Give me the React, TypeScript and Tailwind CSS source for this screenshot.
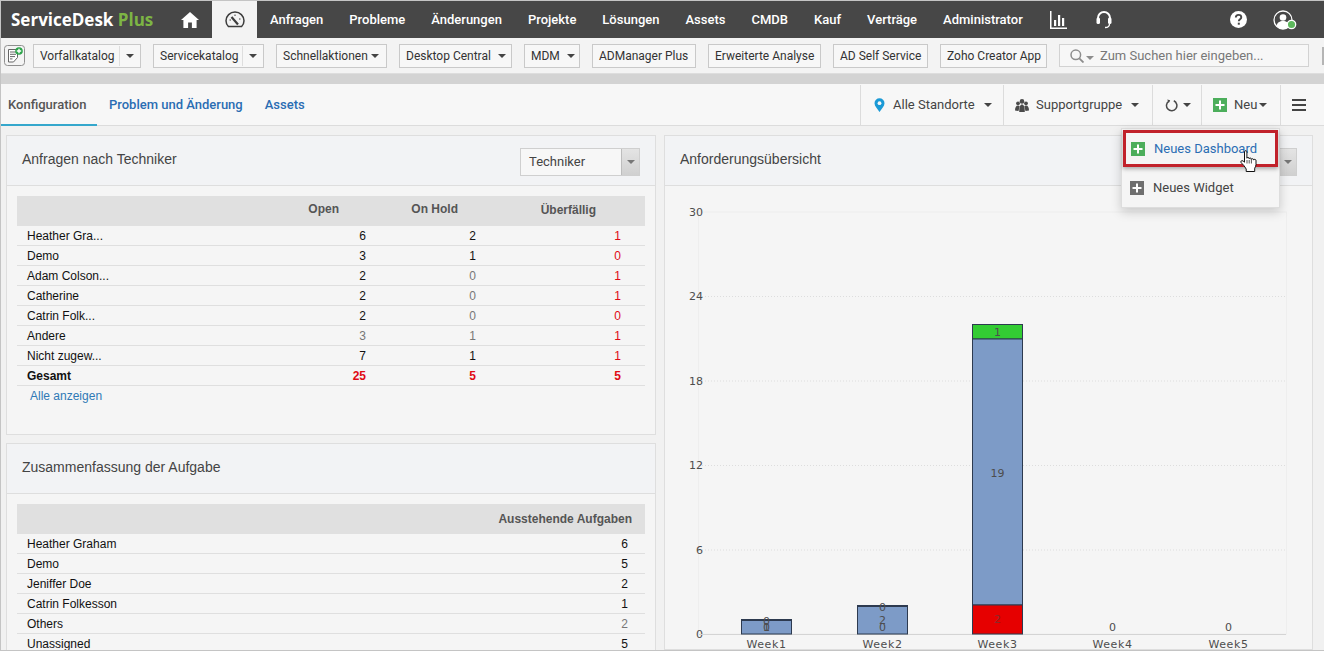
import React from 'react';

const roboto = "font-['Roboto',sans-serif]";
const arial = "font-['Liberation_Sans',sans-serif]";

function Caret({ className = 'border-t-[#444]' }: { className?: string }) {
  return <span className={`inline-block h-0 w-0 border-x-[4px] border-t-[4px] border-x-transparent ${className}`} />;
}

function PlusBox({ color }: { color: string }) {
  return (
    <svg width="14" height="14" viewBox="0 0 14 14" className="shrink-0">
      <rect width="14" height="14" fill={color} />
      <path d="M7 2.5v9M2.5 7h9" stroke="#fff" strokeWidth="2" />
    </svg>
  );
}

function HomeIcon() {
  return (
    <svg width="18" height="16" viewBox="0 0 18 16">
      <path d="M9 0 L18 8 L15.6 8 L15.6 16 L10.9 16 L10.9 10.5 L7.1 10.5 L7.1 16 L2.4 16 L2.4 8 L0 8 Z" fill="#fff" />
    </svg>
  );
}

function GaugeIcon() {
  return (
    <svg width="20" height="17" viewBox="0 0 20 17" fill="none">
      <path d="M3.4 15.5C1.9 14 1 12 1 9.8 1 5 5 1 10 1s9 4 9 8.8c0 2.200-.9 4.200-2.400 5.700z" stroke="#3c3c3c" strokeWidth="1.500" />
      <path d="M6.500 6 13 13.500" stroke="#3c3c3c" strokeWidth="2.200" />
      <path d="M10 3.500v1.500M15.500 8h-1.500M4.500 9H6" stroke="#3c3c3c" strokeWidth="1" />
    </svg>
  );
}

function ChartIcon() {
  return (
    <svg width="17" height="18" viewBox="0 0 17 18" fill="#fff">
      <rect x="0" y="0" width="1.500" height="18" />
      <rect x="0" y="16.500" width="17" height="1.500" />
      <rect x="4" y="9" width="2.200" height="6" />
      <rect x="8" y="4" width="2.200" height="11" />
      <rect x="12" y="7" width="2.200" height="8" />
    </svg>
  );
}

function HeadsetIcon() {
  return (
    <svg width="16" height="19" viewBox="0 0 16 19" fill="none">
      <path d="M2 11V8a6 6 0 0 1 12 0v3" stroke="#fff" strokeWidth="2" />
      <rect x="0.500" y="7.500" width="3.500" height="6.500" rx="1.500" fill="#fff" />
      <rect x="12" y="7.500" width="3.500" height="6.500" rx="1.500" fill="#fff" />
      <path d="M13.500 14c0 2.500-2 3.500-4.500 3.500" stroke="#fff" strokeWidth="1.300" />
    </svg>
  );
}

function HelpIcon() {
  return (
    <svg width="17" height="17" viewBox="0 0 17 17">
      <circle cx="8.500" cy="8.500" r="8.500" fill="#fff" />
      <path d="M5.800 6.500c0-1.600 1.200-2.600 2.800-2.600s2.700 1 2.700 2.400c0 2-2.500 2-2.500 4" fill="none" stroke="#474747" strokeWidth="1.900" />
      <rect x="7.800" y="11.700" width="2" height="2" fill="#474747" />
    </svg>
  );
}

function UserIcon() {
  return (
    <svg width="24" height="20" viewBox="0 0 24 20" fill="none">
      <circle cx="10" cy="10" r="9" stroke="#fff" strokeWidth="1.300" />
      <circle cx="10" cy="7.500" r="3.300" fill="#fff" />
      <path d="M3.500 16c.6-3.600 3.300-5 6.500-5s5.900 1.400 6.500 5c-1.600 1.900-4 3-6.500 3s-4.900-1.100-6.500-3z" fill="#fff" />
      <circle cx="18.500" cy="14.500" r="4.200" fill="#5cb85c" stroke="#fff" strokeWidth="1.300" />
    </svg>
  );
}

function NoteIcon() {
  return (
    <svg width="21" height="21" viewBox="0 0 21 21" fill="none">
      <rect x="0.500" y="0.500" width="20" height="20" rx="3" fill="#f4f4f4" stroke="#8f8f8f" />
      <path d="M4.500 4.500h9v8l-4 4.500h-5z" fill="#fff" stroke="#666" />
      <path d="M6 7h6M6 9.300h6M6 11.600h5M6 13.900h2.500" stroke="#666" />
      <circle cx="15" cy="6" r="3.800" fill="#2ca44a" />
      <path d="M15 3.800v4.400M12.800 6h4.400" stroke="#fff" strokeWidth="1.400" />
    </svg>
  );
}

function SearchIcon() {
  return (
    <svg width="14" height="14" viewBox="0 0 14 14" fill="none">
      <circle cx="5.800" cy="5.800" r="4.800" stroke="#8d8d8d" strokeWidth="1.500" />
      <path d="M9.300 9.300 13.500 13.500" stroke="#8d8d8d" strokeWidth="1.800" />
    </svg>
  );
}

function PinIcon() {
  return (
    <svg width="11" height="14" viewBox="0 0 11 14">
      <path d="M5.500 14C3.500 11 .5 8.300.5 5.300a5 5 0 0 1 10 0c0 3-3 5.700-5 8.700z" fill="#1b9ad6" />
      <circle cx="5.500" cy="5.200" r="1.900" fill="#f7f7f7" />
    </svg>
  );
}

function GroupIcon() {
  return (
    <svg width="14" height="13" viewBox="0 0 14 13" fill="#4a4a4a">
      <circle cx="7" cy="2.400" r="2.300" />
      <circle cx="3" cy="4.300" r="1.900" />
      <circle cx="11" cy="4.300" r="1.900" />
      <path d="M0 11.500c0-3 1-5 3-5 .8 0 1.300.3 1.700.7L3.500 12zM14 11.500c0-3-1-5-3-5-.8 0-1.300.3-1.700.7l1.200 4.800z" />
      <path d="M4.200 13c0-5 1-7.500 2.800-7.500s2.800 2.500 2.800 7.500z" />
    </svg>
  );
}

function RefreshIcon() {
  return (
    <svg width="13" height="13" viewBox="0 0 13 13" fill="none">
      <path d="M4 2.100A5.200 5.200 0 1 0 8.800 1.800" stroke="#4a4a4a" strokeWidth="1.500" />
      <path d="M2.200 0.500 5.200 1.300 3.800 4z" fill="#4a4a4a" />
    </svg>
  );
}

function HandCursor() {
  return (
    <svg width="17" height="23" viewBox="0 0 17 23" className="absolute left-[1239px] top-[149px]">
      <path
        d="M4.500 1.800c0-1.500 2.400-1.500 2.400 0v6.400c0-1 2.200-1 2.200 0v.6c0-1 2.200-1 2.200 0v.7c0-1 2.200-1 2.200 0v.5c0-.9 2.500-.9 2.500.4v4.300c0 1.500-.9 2.300-1.300 3.500v3.300H6.200v-2.500C5 16.500 3 14.500 1.200 12.700c-1-1.200.4-2.800 1.900-1.700l1.400 1.200z"
        fill="#fff"
        stroke="#111"
        strokeWidth="1"
      />
      <path d="M7 10v3.500M9.200 10v3.500M11.400 10v3.500" stroke="#111" strokeWidth="0.700" />
    </svg>
  );
}

const navItems = ['Anfragen', 'Probleme', 'Änderungen', 'Projekte', 'Lösungen', 'Assets', 'CMDB', 'Kauf', 'Verträge', 'Administrator'];

function TopBar() {
  return (
    <div className={`flex h-[37px] shrink-0 items-center bg-[#474747] text-white ${roboto}`}>
      <div className="ml-[10px] w-[170px] shrink-0 font-['Open_Sans',sans-serif] text-[17px] font-bold">
        ServiceDesk <span className="text-[#7db544]">Plus</span>
      </div>
      <div className="flex w-[31px] shrink-0 justify-start">
        <HomeIcon />
      </div>
      <div className="flex h-full w-[45px] shrink-0 items-center justify-center bg-[#f3f3f3]">
        <GaugeIcon />
      </div>
      <nav className="ml-[13px] flex shrink-0 gap-[26px] text-[13px] font-medium">
        {navItems.map((item) => (
          <span key={item}>{item}</span>
        ))}
      </nav>
      <div className="ml-[27px] flex items-center gap-[29px]">
        <ChartIcon />
        <HeadsetIcon />
      </div>
      <div className="ml-auto mr-[27px] flex items-center gap-[26px]">
        <HelpIcon />
        <UserIcon />
      </div>
    </div>
  );
}

function ToolButton({ label, className, split }: { label: string; className: string; split?: boolean }) {
  return (
    <div className={`flex h-[24px] shrink-0 items-center border border-[#c9c9c9] bg-[#f7f7f7] ${className}`}>
      <span className="pl-[6px] whitespace-nowrap">{label}</span>
      {split ? (
        <span className="ml-auto flex h-[20px] w-[21px] items-center justify-center border-l border-[#dedede]">
          <Caret />
        </span>
      ) : null}
    </div>
  );
}

function ToolBar() {
  return (
    <div className={`flex h-[36px] shrink-0 items-center border-b border-[#dddddd] bg-[#f3f3f3] text-[12px] text-[#333] ${roboto}`}>
      <div className="ml-[3px] mr-[8px] shrink-0">
        <NoteIcon />
      </div>
      <div className="flex items-center gap-[12px]">
        <ToolButton label="Vorfallkatalog" className="w-[108px]" split />
        <ToolButton label="Servicekatalog" className="w-[111px]" split />
        <div className="flex h-[24px] w-[111px] shrink-0 items-center gap-[3px] border border-[#c9c9c9] bg-[#f7f7f7] pl-[6px]">
          Schnellaktionen <Caret />
        </div>
        <div className="flex h-[24px] w-[113px] shrink-0 items-center gap-[7px] border border-[#c9c9c9] bg-[#f7f7f7] pl-[6px]">
          Desktop Central <Caret />
        </div>
        <div className="flex h-[24px] w-[56px] shrink-0 items-center gap-[7px] border border-[#c9c9c9] bg-[#f7f7f7] pl-[6px]">
          MDM <Caret />
        </div>
        <ToolButton label="ADManager Plus" className="w-[104px]" />
        <ToolButton label="Erweiterte Analyse" className="w-[113px]" />
        <ToolButton label="AD Self Service" className="w-[95px]" />
        <ToolButton label="Zoho Creator App" className="w-[107px]" />
        <div className="flex h-[23px] w-[250px] shrink-0 items-center border border-[#d2d2d2] bg-[#f7f7f7] pl-[10px] text-[13px] text-[#777]">
          <SearchIcon />
          <span className="ml-[2px] mr-[6px]">
            <Caret className="border-t-[#8d8d8d]" />
          </span>
          Zum Suchen hier eingeben...
        </div>
      </div>
      <div className="ml-auto h-[18px] w-[2px] bg-[#b5b5b5]" />
    </div>
  );
}

function TabBar() {
  return (
    <div className={`flex h-[42px] shrink-0 items-stretch border-b border-[#dcdcdc] bg-[#f7f7f7] text-[13px] ${roboto}`}>
      <div className="-mb-px flex w-[96px] items-center border-b-2 border-[#35a7cc] pl-[7px] pt-px font-medium text-[#555]">Konfiguration</div>
      <div className="ml-[12px] flex items-center pt-px font-medium text-[#2a6db3]">Problem und Änderung</div>
      <div className="ml-[22px] flex items-center pt-px font-medium text-[#2a6db3]">Assets</div>
      <div className="ml-auto flex pt-px text-[#444]">
        <div className="flex w-[143px] items-center border-l border-[#dcdcdc] pl-[13px]">
          <PinIcon />
          <span className="ml-[8px] mr-[9px]">Alle Standorte</span>
          <Caret />
        </div>
        <div className="flex w-[149px] items-center border-l border-[#dcdcdc] pl-[11px]">
          <GroupIcon />
          <span className="ml-[7px] mr-[9px]">Supportgruppe</span>
          <Caret />
        </div>
        <div className="flex w-[49px] items-center gap-[5px] border-l border-[#dcdcdc] pl-[12px]">
          <RefreshIcon />
          <Caret />
        </div>
        <div className="flex w-[79px] items-center border-l border-[#dcdcdc] pl-[11px]">
          <PlusBox color="#4cae5b" />
          <span className="ml-[7px] mr-[2px]">Neu</span>
          <Caret />
        </div>
        <div className="flex w-[44px] items-start border-l border-[#dcdcdc] pl-[11px] pt-[14px]">
          <div className="flex w-[14px] flex-col gap-[3px]">
            <div className="h-[2px] bg-[#444]" />
            <div className="h-[2px] bg-[#444]" />
            <div className="h-[2px] bg-[#444]" />
          </div>
        </div>
      </div>
    </div>
  );
}

function Select({ label }: { label: string }) {
  return (
    <div className={`flex h-[28px] w-[120px] items-stretch border border-[#cfcfcf] bg-[#f7f7f7] text-[13px] text-[#444] ${roboto}`}>
      <span className="flex flex-1 items-center pl-[8px] pt-px">{label}</span>
      <span className="flex w-[18px] items-center justify-center border-l border-[#bdbdbd] bg-gradient-to-b from-[#e4e4e4] to-[#d0d0d0]">
        <Caret className="border-t-[#777]" />
      </span>
    </div>
  );
}

function PanelHeader({ title, children }: { title: string; children?: React.ReactNode }) {
  return (
    <div className="flex h-[50px] shrink-0 items-center justify-between border-b border-[#dedede] bg-[#f2f3f5] pl-[15px] pr-[15px]">
      <span className={`-mt-[3px] text-[14px] font-medium text-[#444] ${arial}`}>{title}</span>
      {children}
    </div>
  );
}

type Cell = { v: string; c?: string };
const red = 'text-[#e00a14]';
const grey = 'text-[#777]';

const techRows: { name: string; cells: Cell[]; total?: boolean }[] = [
  { name: 'Heather Gra...', cells: [{ v: '6' }, { v: '2' }, { v: '1', c: red }] },
  { name: 'Demo', cells: [{ v: '3' }, { v: '1' }, { v: '0', c: red }] },
  { name: 'Adam Colson...', cells: [{ v: '2' }, { v: '0', c: grey }, { v: '1', c: red }] },
  { name: 'Catherine', cells: [{ v: '2' }, { v: '0', c: grey }, { v: '1', c: red }] },
  { name: 'Catrin Folk...', cells: [{ v: '2' }, { v: '0', c: grey }, { v: '0', c: red }] },
  { name: 'Andere', cells: [{ v: '3', c: grey }, { v: '1', c: grey }, { v: '1', c: red }] },
  { name: 'Nicht zugew...', cells: [{ v: '7' }, { v: '1' }, { v: '1', c: red }] },
  { name: 'Gesamt', cells: [{ v: '25', c: red }, { v: '5', c: red }, { v: '5', c: red }], total: true },
];

const taskRows: { name: string; v: string; c?: string }[] = [
  { name: 'Heather Graham', v: '6' },
  { name: 'Demo', v: '5' },
  { name: 'Jeniffer Doe', v: '2' },
  { name: 'Catrin Folkesson', v: '1' },
  { name: 'Others', v: '2', c: grey },
  { name: 'Unassigned', v: '5' },
];

function TechPanel() {
  return (
    <section className="flex h-[300px] shrink-0 flex-col border border-[#dedede] bg-[#f5f5f5]">
      <PanelHeader title="Anfragen nach Techniker">
        <div className="mt-[2px]">
          <Select label="Techniker" />
        </div>
      </PanelHeader>
      <div className={`mx-[10px] mt-[10px] text-[12px] text-[#111] ${arial}`}>
        <div className="flex h-[30px] bg-[#e0e0e0] pl-[10px] pt-[4px] font-bold text-[#555]">
          <span className="w-[312px] text-right">Open</span>
          <span className="w-[119px] text-right">On Hold</span>
          <span className="w-[138px] pt-px text-right">Überfällig</span>
        </div>
        {techRows.map((row) => (
          <div key={row.name} className={`flex h-[20px] items-center border-b border-[#dfdfdf] pl-[10px] ${row.total ? 'font-bold' : ''}`}>
            <span className="w-[239px]">{row.name}</span>
            <span className={`w-[100px] text-right ${row.cells[0].c ?? ''}`}>{row.cells[0].v}</span>
            <span className={`w-[110px] text-right ${row.cells[1].c ?? ''}`}>{row.cells[1].v}</span>
            <span className={`w-[145px] text-right ${row.cells[2].c ?? ''}`}>{row.cells[2].v}</span>
          </div>
        ))}
        <div className="flex h-[20px] items-center pl-[13px] text-[#2f79b5]">Alle anzeigen</div>
      </div>
    </section>
  );
}

function TaskPanel() {
  return (
    <section className="mt-[8px] flex flex-1 flex-col border border-[#dedede] bg-[#f5f5f5]">
      <PanelHeader title="Zusammenfassung der Aufgabe" />
      <div className={`mx-[10px] mt-[10px] text-[12px] text-[#111] ${arial}`}>
        <div className="flex h-[30px] items-center justify-end bg-[#e0e0e0] pr-[13px] font-bold text-[#555]">Ausstehende Aufgaben</div>
        {taskRows.map((row) => (
          <div key={row.name} className="flex h-[20px] items-center justify-between border-b border-[#dfdfdf] pl-[10px] pr-[17px]">
            <span>{row.name}</span>
            <span className={row.c ?? ''}>{row.v}</span>
          </div>
        ))}
      </div>
    </section>
  );
}

const ticks = [
  { label: '30', y: 26, ty: 30 },
  { label: '24', y: 110.5, ty: 114 },
  { label: '18', y: 195, ty: 199 },
  { label: '12', y: 279.5, ty: 283 },
  { label: '6', y: 364, ty: 368 },
  { label: '0', y: 448, ty: 452 },
];

const barStroke = '#2d3a4f';

function Chart() {
  const label = { fontFamily: "'DejaVu Sans', sans-serif", fontSize: 11, fill: '#4d4d4d' };
  return (
    <svg width="647" height="465" viewBox="0 0 647 465" className="block shrink-0">
      <rect x="33.500" y="26" width="588" height="422" fill="none" stroke="#eeeeee" />
      {ticks.map((t) => (
        <g key={t.label}>
          {t.label !== '0' && t.label !== '30' ? (
            <line x1="34" x2="621" y1={t.y} y2={t.y} stroke="#dddddd" strokeDasharray="1 2" />
          ) : null}
          <text x="24" y={t.ty} {...label} dx={t.label.length > 1 ? 0 : 7}>
            {t.label}
          </text>
        </g>
      ))}
      <line x1="34" x2="621" y1="448.500" y2="448.500" stroke="#d4d4d4" />

      <rect x="76.500" y="433.500" width="50" height="14.500" fill="#7d9bc7" stroke={barStroke} />
      <rect x="76" y="433" width="51" height="2" fill={barStroke} />
      <text x="101.500" y="439" textAnchor="middle" {...label}>0</text>
      <text x="101.500" y="445" textAnchor="middle" {...label}>1</text>
      <text x="101.500" y="445" textAnchor="middle" {...label}>0</text>

      <rect x="192.500" y="419.500" width="50" height="28.500" fill="#7d9bc7" stroke={barStroke} />
      <rect x="192" y="419" width="51" height="2" fill={barStroke} />
      <text x="217.500" y="425" textAnchor="middle" {...label}>0</text>
      <text x="217.500" y="438" textAnchor="middle" {...label}>2</text>
      <text x="217.500" y="445" textAnchor="middle" {...label}>0</text>

      <rect x="307.500" y="138.500" width="50" height="14.500" fill="#33cc33" stroke={barStroke} />
      <rect x="307.500" y="153" width="50" height="266" fill="#7d9bc7" stroke={barStroke} />
      <rect x="307.500" y="419" width="50" height="29" fill="#e60000" stroke={barStroke} />
      <text x="332.500" y="150" textAnchor="middle" {...label}>1</text>
      <text x="332.500" y="291" textAnchor="middle" {...label}>19</text>
      <text x="332.500" y="437" textAnchor="middle" {...label} fill="#8a2a2a">2</text>

      <text x="447.500" y="445" textAnchor="middle" {...label}>0</text>
      <text x="563.500" y="445" textAnchor="middle" {...label}>0</text>

      {['Week1', 'Week2', 'Week3', 'Week4', 'Week5'].map((w, i) => (
        <text key={w} x={[101.5, 217.5, 332.5, 447.5, 563.5][i]} y="462" textAnchor="middle" letterSpacing="0.6" {...label}>
          {w}
        </text>
      ))}
    </svg>
  );
}

function Dropdown() {
  return (
    <div className={`absolute left-[1120px] top-[127px] h-[80px] w-[159px] border border-[#dddddd] bg-[#f5f5f5] text-[13px] shadow-[0_4px_10px_rgba(0,0,0,0.18)] ${roboto}`}>
      <div className="mx-px mt-px flex h-[37px] items-center gap-[9px] border-[3px] border-[#c1222b] pl-[5px] text-[#2a6db3] shadow-[0_2px_4px_rgba(0,0,0,0.3)]">
        <PlusBox color="#4cae5b" />
        Neues Dashboard
      </div>
      <div className="mt-[2px] flex h-[38px] items-center gap-[9px] pl-[8px] text-[#444]">
        <PlusBox color="#6f6f6f" />
        Neues Widget
      </div>
    </div>
  );
}

export default function App() {
  return (
    <div className="relative flex h-[651px] w-[1324px] flex-col overflow-hidden border-t border-b border-l border-[#c4c4c4] bg-[#f1f1f1]">
      <TopBar />
      <ToolBar />
      <div className="h-[10px] shrink-0 bg-[#d3d3d3]" />
      <TabBar />
      <main className="flex min-h-0 flex-1 pt-[9px] pl-[5px]">
        <div className="flex w-[650px] shrink-0 flex-col">
          <TechPanel />
          <TaskPanel />
        </div>
        <section className="ml-[8px] flex w-[649px] shrink-0 flex-col border border-[#dedede] bg-[#f5f5f5]">
          <PanelHeader title="Anforderungsübersicht">
            <div className="mt-[2px]">
              <Select label="Woche" />
            </div>
          </PanelHeader>
          <Chart />
        </section>
      </main>
      <Dropdown />
      <HandCursor />
    </div>
  );
}
